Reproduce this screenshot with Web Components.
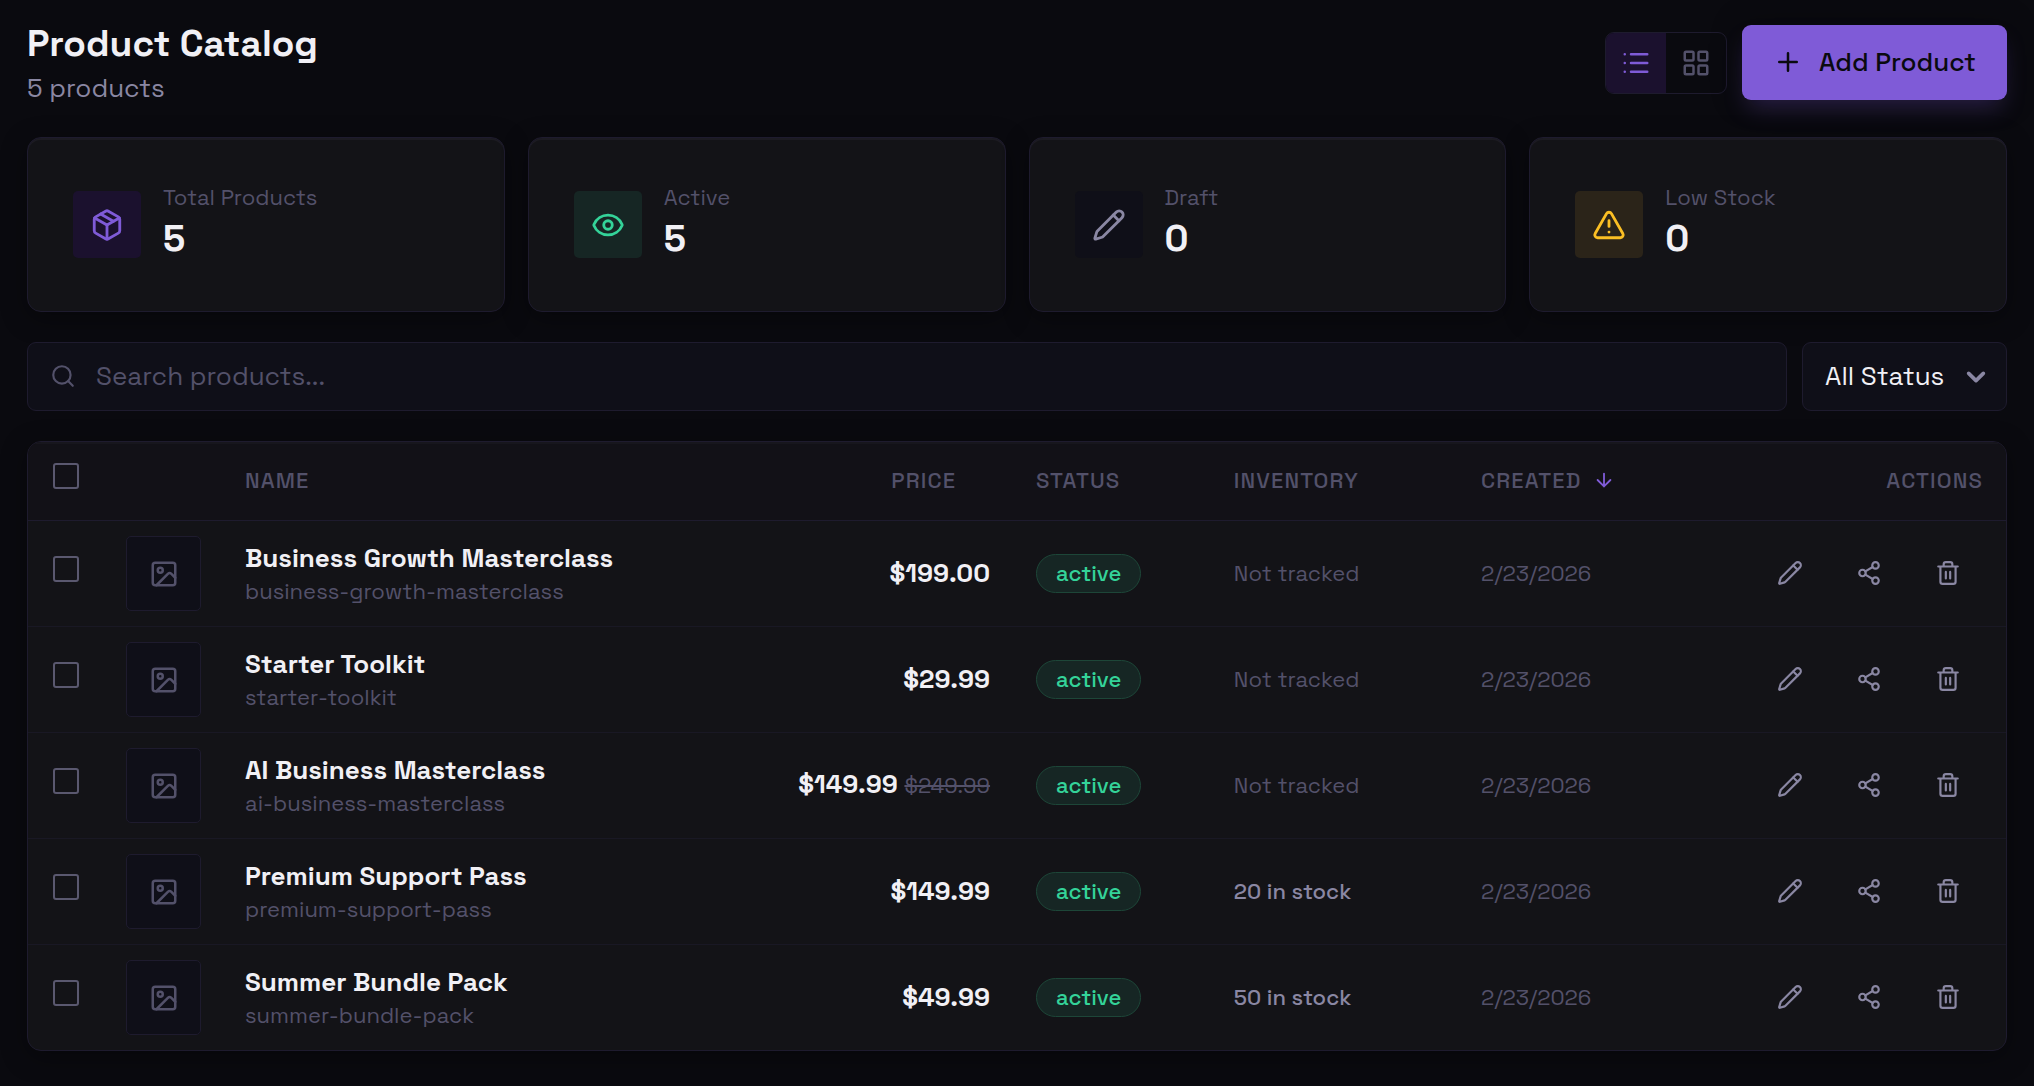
<!DOCTYPE html>
<html lang="en">
<head>
<meta charset="utf-8">
<meta name="viewport" content="width=device-width, initial-scale=1">
<title>Product Catalog</title>
<style>
  :root {
    --bg: #0a0a0f;
    --surface: #131317;
    --surface-head: #121117;
    --field: #0f0f18;
    --line: #1e1b2e;
    --line-soft: #191824;
    --text: #f1f0f5;
    --muted: #8a87a3;
    --dim: #53516a;
    --accent: #7f5bd7;
    --accent-soft: #1b112e;
    --green: #34d399;
    --green-soft: #162624;
    --amber: #fbbf24;
    --amber-soft: #2b2419;
    color-scheme: dark;
  }
  body {
    margin: 0;
    min-height: 100vh;
    background: var(--bg);
    color: var(--text);
    font-family: "Space Grotesk", Inter, "Liberation Sans", sans-serif;
    font-size: 26px;
    line-height: 36px;
  }
</style>
</head>
<body>
<catalog-page></catalog-page>

<script>
const ICONS = {
  list: '<path d="M3 5h.01M3 12h.01M3 19h.01M8 5h13M8 12h13M8 19h13"/>',
  grid: '<rect width="7" height="7" x="3" y="3" rx="1"/><rect width="7" height="7" x="14" y="3" rx="1"/><rect width="7" height="7" x="14" y="14" rx="1"/><rect width="7" height="7" x="3" y="14" rx="1"/>',
  plus: '<path d="M5 12h14M12 5v14"/>',
  box: '<path d="M11 21.73a2 2 0 0 0 2 0l7-4A2 2 0 0 0 21 16V8a2 2 0 0 0-1-1.73l-7-4a2 2 0 0 0-2 0l-7 4A2 2 0 0 0 3 8v8a2 2 0 0 0 1 1.73z"/><path d="M12 22V12"/><path d="M3.29 7 12 12l8.71-5"/><path d="m7.5 4.27 9 5.15"/>',
  eye: '<path d="M2.062 12.348a1 1 0 0 1 0-.696 10.75 10.75 0 0 1 19.876 0 1 1 0 0 1 0 .696 10.75 10.75 0 0 1-19.876 0"/><circle cx="12" cy="12" r="3"/>',
  pencil: '<path d="M21.174 6.812a1 1 0 0 0-3.986-3.987L3.842 16.174a2 2 0 0 0-.5.83l-1.321 4.352a.5.5 0 0 0 .623.622l4.353-1.32a2 2 0 0 0 .83-.497z"/><path d="m15 5 4 4"/>',
  alert: '<path d="m21.73 18-8-14a2 2 0 0 0-3.48 0l-8 14A2 2 0 0 0 4 21h16a2 2 0 0 0 1.73-3"/><path d="M12 9v4M12 17h.01"/>',
  search: '<circle cx="11" cy="11" r="8"/><path d="m21 21-4.3-4.3"/>',
  image: '<rect width="18" height="18" x="3" y="3" rx="2"/><circle cx="9" cy="9" r="2"/><path d="m21 15-3.086-3.086a2 2 0 0 0-2.828 0L6 21"/>',
  share: '<circle cx="18" cy="5" r="3"/><circle cx="6" cy="12" r="3"/><circle cx="18" cy="19" r="3"/><path d="m8.59 13.51 6.83 3.98M15.41 6.51l-6.82 3.98"/>',
  trash: '<path d="M3 6h18M19 6v14a2 2 0 0 1-2 2H7a2 2 0 0 1-2-2V6M8 6V4a2 2 0 0 1 2-2h4a2 2 0 0 1 2 2v2M10 11v6M14 11v6"/>',
  down: '<path d="M12 5v14M19 12l-7 7-7-7"/>',
  chevron: '<path stroke-width="4" d="m4 8 8 8 8-8"/>'
};

const define = (name, html, setup) => {
  const template = document.createElement('template');
  customElements.define(name, class extends HTMLElement {
    connectedCallback() {
      if (this.shadowRoot) return;
      template.innerHTML = typeof html === 'function' ? html(this) : html;
      this.attachShadow({ mode: 'open' }).append(template.content.cloneNode(true));
      if (setup) setup(this.shadowRoot, this);
    }
  });
};

define('ui-icon', el => `
  <style>
    :host { display: block; flex: none; width: var(--size, 26px); height: var(--size, 26px); }
    svg { display: block; width: 100%; height: 100%; fill: none; stroke: currentColor;
          stroke-width: 2; stroke-linecap: round; stroke-linejoin: round; }
  </style>
  <svg viewBox="0 0 24 24" aria-hidden="true">${ICONS[el.getAttribute('name')]}</svg>`);

define('view-toggle', `
  <style>
    :host { display: flex; box-sizing: border-box; border: 1px solid var(--line); border-radius: 9px; overflow: hidden; --size: 30px; }
    button { display: grid; place-items: center; width: 60px; height: 60px; margin: 0; padding: 0; border: 0;
             background: transparent; color: var(--dim); cursor: pointer; }
    button[aria-pressed="true"] { background: var(--accent-soft); color: var(--accent); }
  </style>
  <button type="button" aria-label="List view" aria-pressed="true"><ui-icon name="list"></ui-icon></button>
  <button type="button" aria-label="Grid view" aria-pressed="false"><ui-icon name="grid"></ui-icon></button>`,
  root => {
    const buttons = [...root.querySelectorAll('button')];
    buttons.forEach(b => b.addEventListener('click', () =>
      buttons.forEach(o => o.setAttribute('aria-pressed', String(o === b)))));
  });

define('primary-button', el => `
  <style>
    :host { display: block; }
    button { display: flex; align-items: center; gap: 16px; height: 75px; margin: 0; padding: 0 31px 2px; border: 0;
             border-radius: 9px; background: var(--accent); color: #0a0a0f; font: inherit; font-weight: 500;
             white-space: nowrap; cursor: pointer; --size: 30px;
             box-shadow: 0 12px 24px -6px rgba(127, 91, 215, .3), 0 0 32px rgba(0, 0, 0, .3); }
  </style>
  <button type="button"><ui-icon name="${el.getAttribute('icon')}"></ui-icon><slot></slot></button>`);

define('page-header', `
  <style>
    :host { display: flex; align-items: flex-start; justify-content: space-between; gap: 24px; }
    h1 { margin: 0; font-size: 37px; line-height: 38px; font-weight: 700; }
    p { margin: 0; line-height: 50px; color: var(--muted); }
    .actions { display: flex; align-items: center; gap: 15px; }
  </style>
  <div><h1><slot name="title"></slot></h1><p><slot name="subtitle"></slot></p></div>
  <div class="actions"><slot name="actions"></slot></div>`);

define('stat-card', el => `
  <style>
    :host { display: flex; align-items: center; gap: 22px; box-sizing: border-box; min-height: 175px; padding: 0 45px;
            border: 1px solid var(--line); border-radius: 14px; background: var(--surface);
            box-shadow: 0 6px 26px rgba(0, 0, 0, .35), inset 0 2px 0 #1c1b22; }
    .tile { display: grid; place-items: center; flex: none; width: 68px; height: 67px; border-radius: 5px; --size: 34px; }
    .accent { background: var(--accent-soft); color: var(--accent); }
    .green { background: var(--green-soft); color: var(--green); }
    .plain { background: var(--field); color: var(--muted); }
    .amber { background: var(--amber-soft); color: var(--amber); }
    .text { display: grid; padding-bottom: 9px; }
    .label { font-size: 22px; line-height: 36px; color: var(--dim); }
    .value { font-size: 37px; line-height: 47px; font-weight: 700; }
  </style>
  <div class="tile ${el.getAttribute('tone')}"><ui-icon name="${el.getAttribute('icon')}"></ui-icon></div>
  <div class="text"><span class="label"><slot></slot></span><span class="value"><slot name="value"></slot></span></div>`);

define('search-field', `
  <style>
    :host { display: block; flex: 1; min-width: 0; }
    label { display: flex; align-items: center; gap: 20px; box-sizing: border-box; height: 69px; padding: 0 22px 1px;
            border: 1px solid var(--line); border-radius: 9px; background: var(--field); color: var(--dim); }
    input { flex: 1; min-width: 0; height: 60px; margin: 0; padding: 0; border: 0; outline: 0; background: none;
            color: var(--text); font: inherit; }
    input::placeholder { color: var(--dim); opacity: 1; }
  </style>
  <label><ui-icon name="search"></ui-icon>
    <input type="text" aria-label="Search products" placeholder="Search products..."></label>`);

define('status-filter', `
  <style>
    :host { display: grid; align-items: center; flex: none; }
    select, ui-icon { grid-area: 1 / 1; }
    select { appearance: none; width: 205px; height: 69px; margin: 0; padding: 0 56px 1px 22px; border: 1px solid var(--line);
             border-radius: 9px; background: var(--field); color: var(--text); font: inherit; cursor: pointer; }
    ui-icon { justify-self: end; margin-right: 20px; color: var(--muted); pointer-events: none; --size: 22px; }
  </style>
  <select aria-label="Status">
    <option>All Status</option><option>Active</option><option>Draft</option>
  </select>
  <ui-icon name="chevron"></ui-icon>`);

define('status-badge', `
  <style>
    :host { display: inline-block; box-sizing: border-box; padding: 0 19px; border: 1px solid #1d4638; border-radius: 20px;
            background: var(--green-soft); color: var(--green); font-size: 22px; line-height: 37px; font-weight: 500;
            vertical-align: middle; }
  </style>
  <slot></slot>`);

define('icon-button', el => `
  <style>
    :host { display: block; }
    button { display: grid; place-items: center; width: 70px; height: 60px; margin: 0; padding: 0; border: 0;
             background: none; color: var(--muted); cursor: pointer; }
  </style>
  <button type="button" aria-label="${el.getAttribute('label')}"><ui-icon name="${el.getAttribute('icon')}"></ui-icon></button>`);

const PRODUCTS = [
  ['Business Growth Masterclass', 'business-growth-masterclass', '$199.00', '', ''],
  ['Starter Toolkit', 'starter-toolkit', '$29.99', '', ''],
  ['AI Business Masterclass', 'ai-business-masterclass', '$149.99', '$249.99', ''],
  ['Premium Support Pass', 'premium-support-pass', '$149.99', '', '20 in stock'],
  ['Summer Bundle Pack', 'summer-bundle-pack', '$49.99', '', '50 in stock']
];

const productRow = ([name, slug, price, was, stock]) => `
  <tr>
    <td class="check"><input type="checkbox" aria-label="Select ${name}"></td>
    <td class="media"><div class="thumb"><ui-icon name="image"></ui-icon></div></td>
    <td class="media"><div class="name">${name}</div><div class="slug">${slug}</div></td>
    <td class="price">${price}${was ? ` <s>${was}</s>` : ''}</td>
    <td><status-badge>active</status-badge></td>
    <td class="small ${stock ? 'stock' : ''}">${stock || 'Not tracked'}</td>
    <td class="small">2/23/2026</td>
    <td><div class="actions">
      <icon-button icon="pencil" label="Edit ${name}"></icon-button>
      <icon-button icon="share" label="Share ${name}"></icon-button>
      <icon-button icon="trash" label="Delete ${name}"></icon-button>
    </div></td>
  </tr>`;

define('product-table', `
  <style>
    :host { display: block; border: 1px solid var(--line); border-radius: 14px; background: var(--surface); overflow: hidden;
            box-shadow: 0 6px 26px rgba(0, 0, 0, .35); }
    table { width: 100%; table-layout: fixed; border-collapse: separate; border-spacing: 0; }
    .c-check { width: 75px; } .c-thumb { width: 119px; } .c-price { width: 13%; } .c-status { width: 10%; }
    .c-stock { width: 12.5%; } .c-date { width: 12.5%; } .c-actions { width: 15.2%; }
    th, td { box-sizing: border-box; padding: 0 23px 2px; text-align: left; vertical-align: middle; white-space: nowrap; }
    th { height: 79px; background: var(--surface-head); border-bottom: 1px solid var(--line); color: var(--dim);
         font-size: 22px; line-height: 30px; font-weight: 500; letter-spacing: .05em; text-transform: uppercase;
         box-shadow: inset 0 2px 0 #17161d; }
    td { height: 106px; border-bottom: 1px solid var(--line-soft); }
    tbody tr:last-child td { height: 105px; border-bottom: 0; }
    .media { padding-bottom: 0; }
    .right, .price { text-align: right; }
    th button { display: inline-flex; align-items: center; gap: 12px; margin: 0; padding: 0; border: 0; background: none;
                color: inherit; font: inherit; letter-spacing: inherit; text-transform: inherit; cursor: pointer; --size: 22px; }
    th button ui-icon { color: var(--accent); }
    .unsorted ui-icon { visibility: hidden; }
    .check { padding: 0 0 10px 25px; }
    input { appearance: none; display: block; box-sizing: border-box; width: 26px; height: 26px; margin: 0;
            border: 2px solid #5a586f; border-radius: 3px; background: transparent; }
    input:checked { background: var(--accent); border-color: var(--accent); }
    .thumb { display: grid; place-items: center; box-sizing: border-box; width: 75px; height: 75px; border: 1px solid var(--line);
             border-radius: 5px; background: var(--field); color: var(--dim); --size: 30px; }
    .name { line-height: 34px; font-weight: 600; }
    .slug { font-size: 22px; line-height: 32px; color: var(--dim); }
    .price { font-weight: 600; }
    s { font-size: 22px; font-weight: 400; color: var(--dim); }
    .small { font-size: 22px; color: var(--dim); }
    .stock { color: var(--muted); font-weight: 500; }
    .actions { display: flex; justify-content: flex-end; gap: 9px; }
  </style>
  <table>
    <colgroup><col class="c-check"><col class="c-thumb"><col><col class="c-price"><col class="c-status"><col class="c-stock"><col class="c-date"><col class="c-actions"></colgroup>
    <thead><tr>
      <th class="check"><input type="checkbox" aria-label="Select all products"></th>
      <th></th>
      <th>Name</th>
      <th class="right"><button type="button" class="unsorted">Price<ui-icon name="down"></ui-icon></button></th>
      <th>Status</th>
      <th>Inventory</th>
      <th><button type="button">Created<ui-icon name="down"></ui-icon></button></th>
      <th class="right">Actions</th>
    </tr></thead>
    <tbody>${PRODUCTS.map(productRow).join('')}</tbody>
  </table>`);

define('catalog-page', `
  <style>
    :host { display: flex; flex-direction: column; gap: 30px; padding: 25px 27px 36px; }
    page-header { height: 82px; }
    .stats { display: grid; grid-template-columns: repeat(auto-fit, minmax(360px, 1fr)); gap: 23px; }
    .filters { display: flex; gap: 15px; }
  </style>
  <page-header>
    <span slot="title">Product Catalog</span>
    <span slot="subtitle">5 products</span>
    <view-toggle slot="actions"></view-toggle>
    <primary-button slot="actions" icon="plus">Add Product</primary-button>
  </page-header>
  <div class="stats">
    <stat-card icon="box" tone="accent">Total Products<span slot="value">5</span></stat-card>
    <stat-card icon="eye" tone="green">Active<span slot="value">5</span></stat-card>
    <stat-card icon="pencil" tone="plain">Draft<span slot="value">0</span></stat-card>
    <stat-card icon="alert" tone="amber">Low Stock<span slot="value">0</span></stat-card>
  </div>
  <div class="filters"><search-field></search-field><status-filter></status-filter></div>
  <product-table></product-table>`);
</script>
</body>
</html>
